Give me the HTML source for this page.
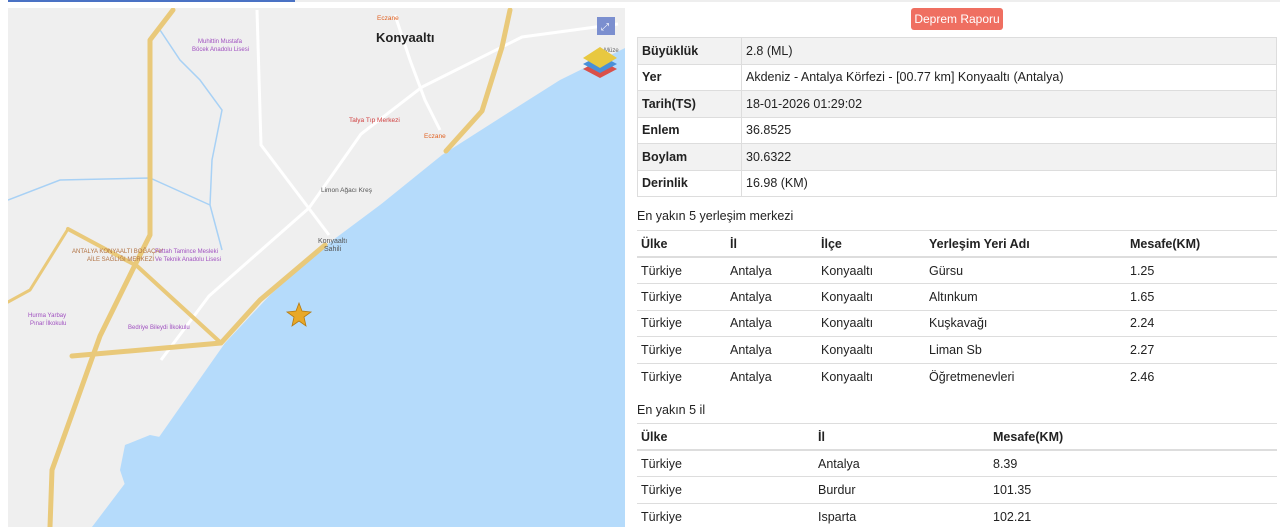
<!DOCTYPE html>
<html><head><meta charset="utf-8"><style>
*{margin:0;padding:0;box-sizing:border-box}
body{width:1280px;height:527px;overflow:hidden;background:#fff;font-family:"Liberation Sans",sans-serif;font-size:12.5px;color:#222;position:relative}
.abs{position:absolute}
table{border-collapse:collapse;position:absolute;left:637px;width:640px}
td,th{text-align:left;padding:0 4px;height:26.5px;font-weight:normal}
.t1 td{border:1px solid #ddd}
.t1 tr:nth-child(odd){background:#f2f2f2}
.t1 td:first-child{font-weight:bold;width:104px}
.t2 th{font-weight:bold;border-top:1px solid #ddd;border-bottom:2px solid #ddd}
.t2 td{border-top:1px solid #ddd}
</style></head><body>
<div class="abs" style="left:8px;top:0;width:287px;height:2px;background:#4a72c4"></div>
<div class="abs" style="left:295px;top:0;width:985px;height:2px;background:#eee"></div>
<svg class="abs" style="left:8px;top:8px" width="617" height="519" viewBox="8 8 617 519">
<rect x="8" y="8" width="617" height="519" fill="#efefef"/>
<path d="M625 48 L560 80 L500 118 L442 155 L380 205 L321 249 L270 295 L225 343 L185 400 L150 450 L120 490 L92 527 L625 527Z" fill="#b5dbfb"/>
<path d="M175 440 L150 435 L125 445 L120 470 L130 500 L150 505 L165 470 Z" fill="#b5dbfb"/>
<path d="M160 30 L180 60 L200 80 L222 110 L212 160 L210 205 L222 250" stroke="#a8d1f5" stroke-width="1.5" fill="none"/>
<path d="M8 200 L60 180 L150 178 L210 205" stroke="#a8d1f5" stroke-width="1.5" fill="none"/>
<g stroke="#fff" stroke-width="3" fill="none">
<path d="M618 24 L522 37 L422 87 L361 134 L309 208 L209 296 L161 360"/>
<path d="M257 10 L261 145 L329 235"/>
<path d="M395 15 L410 60 L425 100 L440 130"/>
</g>
<g stroke="#e9c97a" stroke-width="5" fill="none" stroke-linecap="round" stroke-linejoin="round">
<path d="M173 10 L150 40 L150 235 L133 269 L100 336 L52 470 L50 527"/>
<path d="M510 10 L502 47 L482 111 L446 151"/>
<path d="M68 229 L137 266 L221 343" stroke-width="4"/>
<path d="M8 302 L30 290 L68 229" stroke-width="3"/>
<path d="M72 356 L221 343 L260 300 L325 245"/>
</g>
<text x="376" y="42" font-size="13" font-weight="bold" fill="#222">Konyaaltı</text>
<text x="349" y="122" font-size="6.5" fill="#d04040">Talya Tıp Merkezi</text>
<text x="424" y="138" font-size="6.5" fill="#e06020">Eczane</text>
<text x="377" y="20" font-size="6.5" fill="#e06020">Eczane</text>
<text x="321" y="192" font-size="6.5" fill="#555">Limon Ağacı Kreş</text>
<text x="318" y="243" font-size="7" fill="#555">Konyaaltı</text>
<text x="324" y="251" font-size="7" fill="#555">Sahili</text>
<text x="198" y="43" font-size="6" fill="#a050c0">Muhittin Mustafa</text>
<text x="192" y="51" font-size="6" fill="#a050c0">Böcek Anadolu Lisesi</text>
<text x="72" y="253" font-size="6" fill="#b07040">ANTALYA KONYAALTI BOĞAÇAY</text>
<text x="87" y="261" font-size="6" fill="#b07040">AİLE SAĞLIĞI MERKEZİ</text>
<text x="155" y="253" font-size="6" fill="#a050c0">Fettah Tamince Mesleki</text>
<text x="155" y="261" font-size="6" fill="#a050c0">Ve Teknik Anadolu Lisesi</text>
<text x="28" y="317" font-size="6" fill="#a050c0">Hurma Yarbay</text>
<text x="30" y="325" font-size="6" fill="#a050c0">Pınar İlkokulu</text>
<text x="128" y="329" font-size="6" fill="#a050c0">Bedriye Bileydi İlkokulu</text>
<text x="604" y="52" font-size="6" fill="#666">Müze</text>
<polygon points="299,303 302,311 311,312 304,317 306,326 299,321 292,326 294,317 287,312 296,311" fill="#e8a828" stroke="#b57a10" stroke-width="0.8"/>
<rect x="597" y="17" width="18" height="18" fill="#7b8fcf"/>
<text x="601" y="30" font-size="10" fill="#fff">⤢</text>
<polygon points="583,69 600,60 617,69 600,78" fill="#d9504a"/>
<polygon points="583,64 600,55 617,64 600,73" fill="#4a90d9"/>
<polygon points="583,58 600,47 617,58 600,68" fill="#e8c840"/>
</svg>
<div class="abs" style="left:911px;top:8px;width:92px;height:22px;background:#ef6f61;border-radius:3px;color:#fff;font-size:12px;text-align:center;line-height:22px">Deprem Raporu</div>
<table class="t1" style="top:37px">
<tr><td>Büyüklük</td><td>2.8 (ML)</td></tr>
<tr><td>Yer</td><td>Akdeniz - Antalya Körfezi - [00.77 km] Konyaaltı (Antalya)</td></tr>
<tr><td>Tarih(TS)</td><td>18-01-2026 01:29:02</td></tr>
<tr><td>Enlem</td><td>36.8525</td></tr>
<tr><td>Boylam</td><td>30.6322</td></tr>
<tr><td>Derinlik</td><td>16.98 (KM)</td></tr>
</table>
<div class="abs" style="left:637px;top:209px">En yakın 5 yerleşim merkezi</div>
<table class="t2" style="top:230px">
<tr><th style="width:89px">Ülke</th><th style="width:91px">İl</th><th style="width:108px">İlçe</th><th style="width:201px">Yerleşim Yeri Adı</th><th>Mesafe(KM)</th></tr>
<tr><td>Türkiye</td><td>Antalya</td><td>Konyaaltı</td><td>Gürsu</td><td>1.25</td></tr>
<tr><td>Türkiye</td><td>Antalya</td><td>Konyaaltı</td><td>Altınkum</td><td>1.65</td></tr>
<tr><td>Türkiye</td><td>Antalya</td><td>Konyaaltı</td><td>Kuşkavağı</td><td>2.24</td></tr>
<tr><td>Türkiye</td><td>Antalya</td><td>Konyaaltı</td><td>Liman Sb</td><td>2.27</td></tr>
<tr><td>Türkiye</td><td>Antalya</td><td>Konyaaltı</td><td>Öğretmenevleri</td><td>2.46</td></tr>
</table>
<div class="abs" style="left:637px;top:403px">En yakın 5 il</div>
<table class="t2" style="top:423px">
<tr><th style="width:177px">Ülke</th><th style="width:175px">İl</th><th>Mesafe(KM)</th></tr>
<tr><td>Türkiye</td><td>Antalya</td><td>8.39</td></tr>
<tr><td>Türkiye</td><td>Burdur</td><td>101.35</td></tr>
<tr><td>Türkiye</td><td>Isparta</td><td>102.21</td></tr>
</table>
</body></html>
